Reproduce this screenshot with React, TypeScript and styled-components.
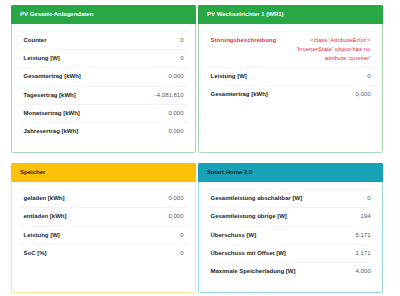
import React from 'react';
import styled, { createGlobalStyle } from 'styled-components';

type Variant = 'success' | 'warning' | 'info';

interface Row {
  label: string;
  value: React.ReactNode;
  danger?: boolean;
}

interface CardData {
  title: string;
  variant: Variant;
  rows: Row[];
}

const palette: Record<Variant, { bg: string; text: string; border: string }> = {
  success: { bg: '#28a745', text: '#ffffff', border: '#a6dab3' },
  warning: { bg: '#ffc107', text: '#212529', border: '#ffe393' },
  info: { bg: '#17a2b8', text: '#212529', border: '#96d7e0' },
};

const cards: CardData[] = [
  {
    title: 'PV Gesamt-Anlagendaten',
    variant: 'success',
    rows: [
      { label: 'Counter', value: '0' },
      { label: 'Leistung [W]', value: '0' },
      { label: 'Gesamtertrag [kWh]', value: '0,000' },
      { label: 'Tagesertrag [kWh]', value: '-4.081,810' },
      { label: 'Monatsertrag [kWh]', value: '0,000' },
      { label: 'Jahresertrag [kWh]', value: '0,000' },
    ],
  },
  {
    title: 'PV Wechselrichter 1 (WR1)',
    variant: 'success',
    rows: [
      {
        label: 'Störungsbeschreibung',
        value: (
          <>
            &lt;class 'AttributeError'&gt;
            <br />
            'InverterState' object has no attribute 'counter'
          </>
        ),
        danger: true,
      },
      { label: 'Leistung [W]', value: '0' },
      { label: 'Gesamtertrag [kWh]', value: '0,000' },
    ],
  },
  {
    title: 'Speicher',
    variant: 'warning',
    rows: [
      { label: 'geladen [kWh]', value: '0,000' },
      { label: 'entladen [kWh]', value: '0,000' },
      { label: 'Leistung [W]', value: '0' },
      { label: 'SoC [%]', value: '0' },
    ],
  },
  {
    title: 'Smart Home 2.0',
    variant: 'info',
    rows: [
      { label: 'Gesamtleistung abschaltbar [W]', value: '0' },
      { label: 'Gesamtleistung übrige [W]', value: '194' },
      { label: 'Überschuss [W]', value: '5.171' },
      { label: 'Überschuss mit Offset [W]', value: '1.171' },
      { label: 'Maximale Speicherladung [W]', value: '4.000' },
    ],
  },
];

const App = () => {
  return (
    <>
      <GlobalStyle />
      <Grid>
        {cards.map((card) => (
          <Card key={card.title} variant={card.variant}>
            <Header variant={card.variant}>{card.title}</Header>
            <Body>
              <Table>
                <tbody>
                  {card.rows.map((row) => (
                    <tr key={row.label}>
                      <Label danger={row.danger}>{row.label}</Label>
                      <Value danger={row.danger}>{row.value}</Value>
                    </tr>
                  ))}
                </tbody>
              </Table>
            </Body>
          </Card>
        ))}
      </Grid>
    </>
  );
};

const GlobalStyle = createGlobalStyle`
  html, body {
    margin: 0;
    background: #ffffff;
  }
  body {
    font-family: 'Liberation Sans', Arial, sans-serif;
    font-size: 6px;
    line-height: 9px;
    color: #212529;
  }
`;

const Grid = styled.div`
  display: grid;
  grid-template-columns: 185px 185px;
  column-gap: 2px;
  row-gap: 10px;
  padding: 5px 0 0 11px;
`;

const Card = styled.div<{ variant: Variant }>`
  display: flex;
  flex-direction: column;
  border: 1px solid ${(p) => palette[p.variant].border};
  border-radius: 1.5px;
  background: #ffffff;
`;

const Header = styled.div<{ variant: Variant }>`
  margin: -1px -1px 0;
  padding: 5px 8px 5px 9px;
  background: ${(p) => palette[p.variant].bg};
  color: ${(p) => palette[p.variant].text};
  font-weight: 700;
  border-radius: 1.5px 1.5px 0 0;
`;

const Body = styled.div`
  padding: 7px 7px 7px;
`;

const Table = styled.table`
  width: 100%;
  border-collapse: collapse;
  margin-bottom: 5px;

  td {
    border-top: 1px solid #f3f4f5;
    padding: 4.1px 4.5px;
    vertical-align: top;
  }
`;

const Label = styled.td<{ danger?: boolean }>`
  font-weight: 700;
  white-space: nowrap;
  color: ${(p) => (p.danger ? '#dc3545' : '#212529')};
`;

const Value = styled.td<{ danger?: boolean }>`
  text-align: right;
  color: ${(p) => (p.danger ? '#dc3545' : '#555a5e')};
`;

export default App;
